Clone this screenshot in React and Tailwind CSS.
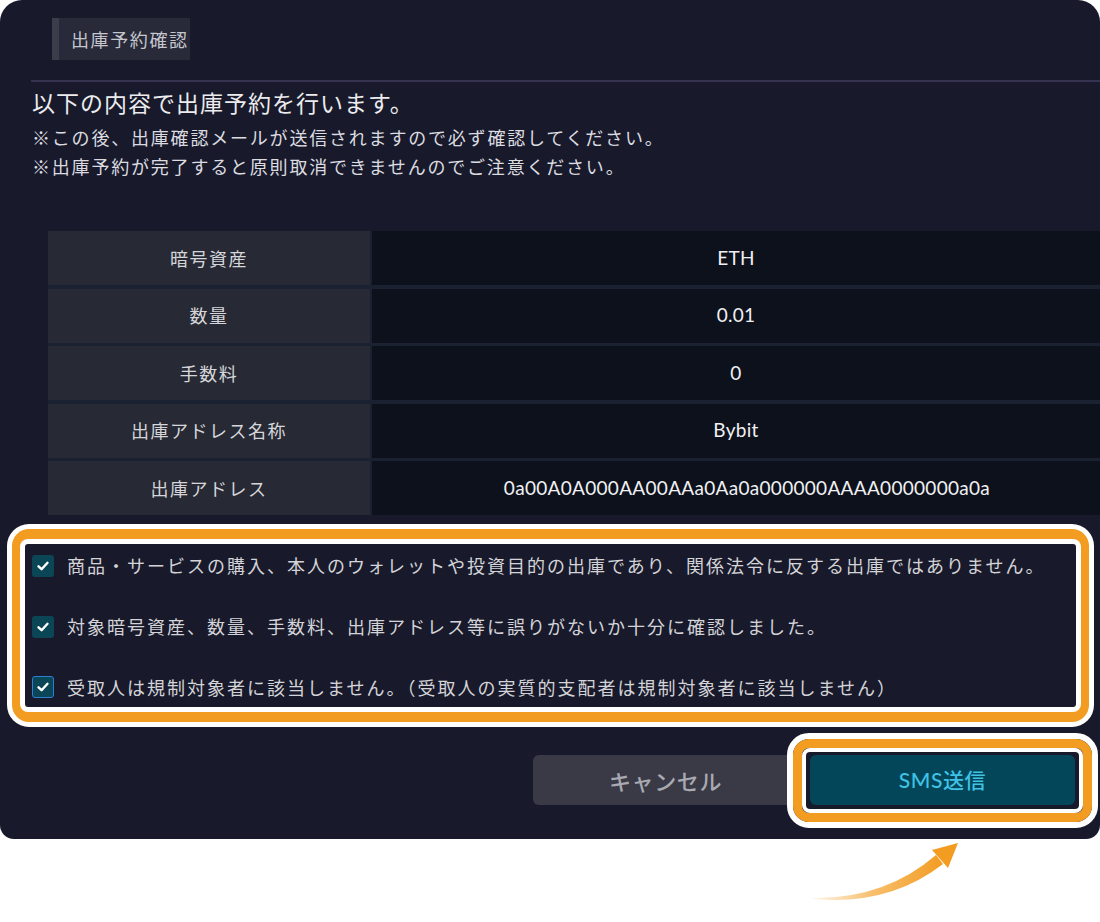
import React from "react";

const rows = [
  ["暗号資産", "ETH", ""],
  ["数量", "0.01", ""],
  ["手数料", "0", ""],
  ["出庫アドレス名称", "Bybit", ""],
  ["出庫アドレス", "0a00A0A000AA00AAa0Aa0a000000AAAA0000000a0a", "pl-[22px]"],
];

const checks = [
  { text: "商品・サービスの購入、本人のウォレットや投資目的の出庫であり、関係法令に反する出庫ではありません。", focus: false },
  { text: "対象暗号資産、数量、手数料、出庫アドレス等に誤りがないか十分に確認しました。", focus: false },
  { text: "受取人は規制対象者に該当しません。（受取人の実質的支配者は規制対象者に該当しません）", focus: true },
];

function Check({ focus }) {
  return (
    <div
      className={
        "w-[22px] h-[22px] rounded-[3px] bg-[#0a4656] flex items-center justify-center shrink-0 " +
        (focus ? "border-[1.5px] border-[#2b7fd4]" : "")
      }
    >
      <svg width="14" height="14" viewBox="0 0 14 14" fill="none">
        <polyline points="2.5,7.3 5.6,10.2 11.5,3.8" stroke="#ffffff" strokeWidth="2.4" strokeLinecap="round" strokeLinejoin="round" />
      </svg>
    </div>
  );
}

export default function App() {
  const jp = { fontFamily: '"Noto Sans CJK JP", "Noto Sans", sans-serif' };
  const lat = { fontFamily: 'Lato, "Noto Sans CJK JP", sans-serif' };
  return (
    <div className="w-[1100px] h-[922px] bg-white" style={jp}>
      <div className="relative bg-[#181a2b] rounded-t-[22px] rounded-b-[14px] h-[839px] flex flex-col">
        {/* tab */}
        <div className="mt-[18px] ml-[52px] flex h-[42px] w-[138px] bg-[#282a39]">
          <div className="w-[7px] bg-[#3b3d4a]" />
          <span className="pl-[12px] flex items-center text-[18px] tracking-[1.6px] text-[#c6c6ce]">出庫予約確認</span>
        </div>
        <div className="mt-[20px] ml-[31px] h-[2px] bg-[#35334f]" />
        <div className="mt-[5px] pl-[32px] h-[30px] flex items-center text-[23px] tracking-[1px] text-[#ececee]">
          以下の内容で出庫予約を行います。
        </div>
        <div className="mt-[6px] pl-[32px] h-[29px] flex items-center text-[18px] tracking-[1.8px] text-[#dcdce0]">
          ※この後、出庫確認メールが送信されますので必ず確認してください。
        </div>
        <div className="pl-[32px] h-[29px] flex items-center text-[18px] tracking-[1.8px] text-[#dcdce0]">
          ※出庫予約が完了すると原則取消できませんのでご注意ください。
        </div>

        {/* table */}
        <div className="mt-[50px] ml-[48px] grid grid-cols-[322px_1fr] gap-x-[2px] gap-y-[3.5px] bg-[#1a2131]">
          {rows.map(([k, v, extra]) => (
            <React.Fragment key={k}>
              <div className="h-[54px] bg-[#272a35] flex items-center justify-center text-[18px] tracking-[1.5px] text-[#d6d6da]">
                {k}
              </div>
              <div className={"h-[54px] bg-[#0c111c] flex items-center justify-center text-[19px] tracking-[0.3px] text-[#f0f0f2] " + extra} style={lat}>
                {v}
              </div>
            </React.Fragment>
          ))}
        </div>

        {/* checkbox highlight */}
        <div className="mt-[9px] ml-[7px] w-[1087px] bg-white p-[5px] rounded-[22px]">
          <div className="bg-[#f39c22] px-[8px] py-[10px] rounded-[17px]">
            <div className="bg-white p-[5px] rounded-[8px]">
              <div className="h-[163px] bg-[#181a2b] rounded-[3px] pt-[2px] flex flex-col gap-[21px]">
                {checks.map((c, i) => (
                  <div key={i} className="h-[40px] flex items-center pl-[7px] gap-[13px]">
                    <Check focus={c.focus} />
                    <span className="text-[18px] tracking-[2px] text-[#d4d4d8] whitespace-nowrap">{c.text}</span>
                  </div>
                ))}
              </div>
            </div>
          </div>
        </div>

        {/* buttons */}
        <div className="mt-[28px] flex justify-end pr-[25px] gap-[12px]">
          <button className="w-[265px] h-[50px] rounded-[6px] bg-[#393a46] text-[22px] font-medium tracking-[0.6px] text-[#a9a9b2] flex items-center justify-center" style={jp}>
            キャンセル
          </button>
          <div className="relative">
            <button className="w-[265px] h-[50px] rounded-[6px] bg-[#03465a] text-[21px] font-medium tracking-[0.6px] text-[#3fc2e4] flex items-center justify-center" style={lat}>
              SMS送信
            </button>
            <div className="pointer-events-none absolute left-[-23px] right-[-23px] top-[-22px] bottom-[-23px] border-[6px] border-white rounded-[22px]">
              <div className="w-full h-full border-[9px] border-[#f39c22] rounded-[16px]">
                <div className="w-full h-full border-[4px] border-white rounded-[8px]" />
              </div>
            </div>
          </div>
        </div>
      </div>

      {/* arrow */}
      <div className="ml-[805px] h-[70px]">
        <svg width="170" height="70" viewBox="0 0 170 70">
          <defs>
            <linearGradient id="ag" x1="0" y1="0" x2="1" y2="0">
              <stop offset="0" stopColor="#fff6ea" />
              <stop offset="0.45" stopColor="#f7bf6e" />
              <stop offset="1" stopColor="#f39c22" />
            </linearGradient>
          </defs>
          <path d="M8 59 Q 80 60 131 16 L 138 25 Q 84 67 8 60 Z" fill="url(#ag)" />
          <polygon points="153,4 127,11 143,29" fill="#f39c22" />
        </svg>
      </div>
    </div>
  );
}
